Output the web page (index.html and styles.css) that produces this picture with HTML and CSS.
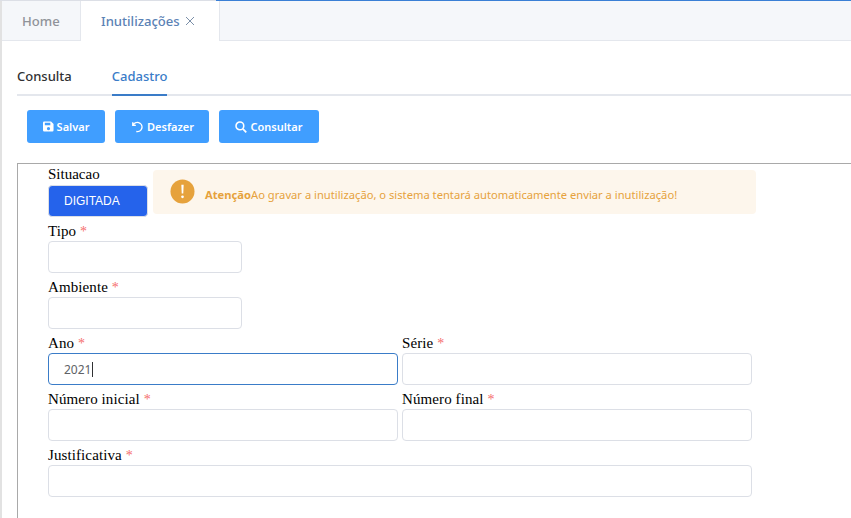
FILE: index.html
```html
<!DOCTYPE html>
<html lang="pt">
<head>
<meta charset="utf-8">
<title>Inutilizações</title>
<link rel="stylesheet" href="styles.css">
</head>
<body>
<div class="topline"></div>
<div class="app">
  <nav class="tabs">
    <a class="tab tab-home">Home</a>
    <a class="tab tab-active">Inutilizações
      <svg class="close" viewBox="0 0 10 10" width="10" height="10"><path d="M1 1l8 8M9 1l-8 8" stroke="#7b8fa8" stroke-width="1" fill="none"/></svg>
    </a>
  </nav>
  <div class="subtabs">
    <a class="subtab">Consulta</a>
    <a class="subtab subtab-active">Cadastro</a>
  </div>
  <div class="actions">
    <button class="btn btn-save">
      <svg viewBox="0 0 12 12" width="11" height="11"><path fill="#fff" fill-rule="evenodd" d="M1.3 .5h7.5l2.7 2.7v7a1.3 1.3 0 0 1-1.3 1.3H1.3A1.3 1.3 0 0 1 0 10.2V1.800A1.300 1.300 0 0 1 1.300 .5zM2 2v2.700h6V2zM6 6.500a1.800 1.800 0 1 0 0 3.600 1.800 1.800 0 0 0 0-3.600z"/></svg>
      Salvar
    </button>
    <button class="btn btn-undo">
      <svg viewBox="0 0 14 14" width="13" height="13"><path fill="none" stroke="#fff" stroke-width="1.500" d="M3 2.500v3.300h3.300M3.200 5.800A5 5 0 1 1 6.800 12.400"/></svg>
      Desfazer
    </button>
    <button class="btn btn-search">
      <svg viewBox="0 0 13 13" width="12" height="12"><circle cx="5.300" cy="5.300" r="4.200" fill="none" stroke="#fff" stroke-width="1.700"/><path d="M8.500 8.500l3.700 3.700" stroke="#fff" stroke-width="1.900" fill="none"/></svg>
      Consultar
    </button>
  </div>
  <form class="panel">
    <div class="status-row">
      <div class="status">
        <label class="status-label">Situacao</label>
        <div class="status-value">DIGITADA</div>
      </div>
      <div class="alert">
        <svg class="alert-icon" viewBox="0 0 26 26" width="25" height="25"><circle cx="13" cy="13" r="12.500" fill="#e6a23c"/><path d="M11.800 6h2.400l-.4 9h-1.600z" fill="#fff"/><circle cx="13" cy="18.500" r="1.400" fill="#fff"/></svg>
        <span class="alert-text"><strong>Atenção</strong>Ao gravar a inutilização, o sistema tentará automaticamente enviar a inutilização!</span>
      </div>
    </div>
    <div class="row">
      <div class="field third"><label>Tipo <i>*</i></label><div class="input"></div></div>
    </div>
    <div class="row">
      <div class="field third"><label>Ambiente <i>*</i></label><div class="input"></div></div>
    </div>
    <div class="row">
      <div class="field half"><label>Ano <i>*</i></label><div class="input input-focus">2021<span class="caret"></span></div></div>
      <div class="field half"><label>Série <i>*</i></label><div class="input"></div></div>
    </div>
    <div class="row">
      <div class="field half"><label>Número inicial <i>*</i></label><div class="input"></div></div>
      <div class="field half"><label>Número final <i>*</i></label><div class="input"></div></div>
    </div>
    <div class="row">
      <div class="field full"><label>Justificativa <i>*</i></label><div class="input"></div></div>
    </div>
  </form>
</div>
</body>
</html>
```
FILE: styles.css
```css
* { box-sizing: border-box; }
html, body { margin: 0; height: 100%; overflow: hidden; background: #fff; }
body { font-family: "Noto Sans", "Open Sans", sans-serif; }

.topline {
  height: 1px;
  background: linear-gradient(to right, #dcdfe6 216px, #3a7fd5 216px);
}
.app {
  height: 517px;
  border-left: 2px solid #e2e2e2;
}

.tabs {
  display: flex;
  height: 40px;
  background: #f5f7fa;
  border-bottom: 1px solid #e4e7ed;
}
.tab {
  display: flex;
  align-items: center;
  font-size: 13.1px;
  font-weight: 500;
  height: 40px;
}
.tab-home {
  width: 79px;
  padding-left: 20px;
  color: #909399;
  border-right: 1px solid #e4e7ed;
}
.tab-active {
  width: 139px;
  padding-left: 20px;
  color: #5b82b5;
  background: #fff;
  border-right: 1px solid #e4e7ed;
}
.close { margin-left: 5px; }

.subtabs {
  display: flex;
  margin: 0 0 0 15px;
  height: 55px;
  padding-top: 20px;
  border-bottom: 2px solid #e4e7ed;
}
.subtab {
  font-size: 13px;
  font-weight: 500;
  color: #303133;
  height: 35px;
  line-height: 31px;
  margin-right: 40px;
}
.subtab-active {
  color: #3a7cc8;
  border-bottom: 2px solid #3a7cc8;
}

.actions {
  display: flex;
  gap: 10px;
  padding: 14px 0 0 25px;
}
.btn {
  display: flex;
  align-items: center;
  justify-content: center;
  gap: 3px;
  height: 33px;
  padding: 0;
  border: 0;
  border-radius: 3px;
  background: #409eff;
  color: #fff;
  font-family: inherit;
  font-size: 11px;
  font-weight: 600;
}
.btn-save { width: 78px; }
.btn-undo { width: 94px; gap: 4px; }
.btn-search { width: 100px; }

.panel {
  margin: 20px 0 0 15px;
  height: 360px;
  padding: 2px 0 0 30px;
  border-top: 1px solid #a9a9a9;
  border-left: 1px solid #a9a9a9;
  font-family: "Liberation Serif", serif;
}

.status-row { display: flex; }
.status { width: 100px; }
.status-label {
  display: block;
  height: 19px;
  font-size: 15px;
  line-height: 16px;
  color: #000;
}
.status-value {
  height: 32px;
  padding-left: 15px;
  border: 1px solid #dcdfe6;
  border-radius: 4px;
  background: #2563eb;
  color: #fff;
  font-family: "Liberation Sans", sans-serif;
  font-size: 12px;
  line-height: 30px;
}
.alert {
  display: flex;
  align-items: center;
  width: 603px;
  height: 44px;
  margin: 4px 0 0 5px;
  padding-left: 17px;
  border-radius: 4px;
  background: #fdf6ec;
}
.alert-icon { flex: none; margin-top: -2px; }
.alert-text {
  margin: 4px 0 0 10px;
  font-family: "Noto Sans", sans-serif;
  font-size: 11.2px;
  color: #e6a23c;
}

.row { display: flex; gap: 4px; }
.field { display: flex; flex-direction: column; }
.third { width: 194px; }
.half { width: 350px; }
.full { width: 704px; }
.field label {
  display: block;
  height: 24px;
  padding-top: 5px;
  font-size: 15px;
  line-height: 19px;
  letter-spacing: 0.1px;
  color: #000;
}
.field i {
  font-style: normal;
  font-size: 14px;
  color: #f56c6c;
}
.input {
  height: 32px;
  padding-left: 15px;
  border: 1px solid #dcdfe6;
  border-radius: 4px;
  background: #fff;
  font-family: "Noto Sans", sans-serif;
  font-size: 12px;
  line-height: 32px;
  color: #606266;
}
.input-focus { border-color: #3a7cc8; }
.caret {
  display: inline-block;
  width: 1px;
  height: 15px;
  margin-left: 1px;
  background: #303133;
  vertical-align: -3px;
}
```
